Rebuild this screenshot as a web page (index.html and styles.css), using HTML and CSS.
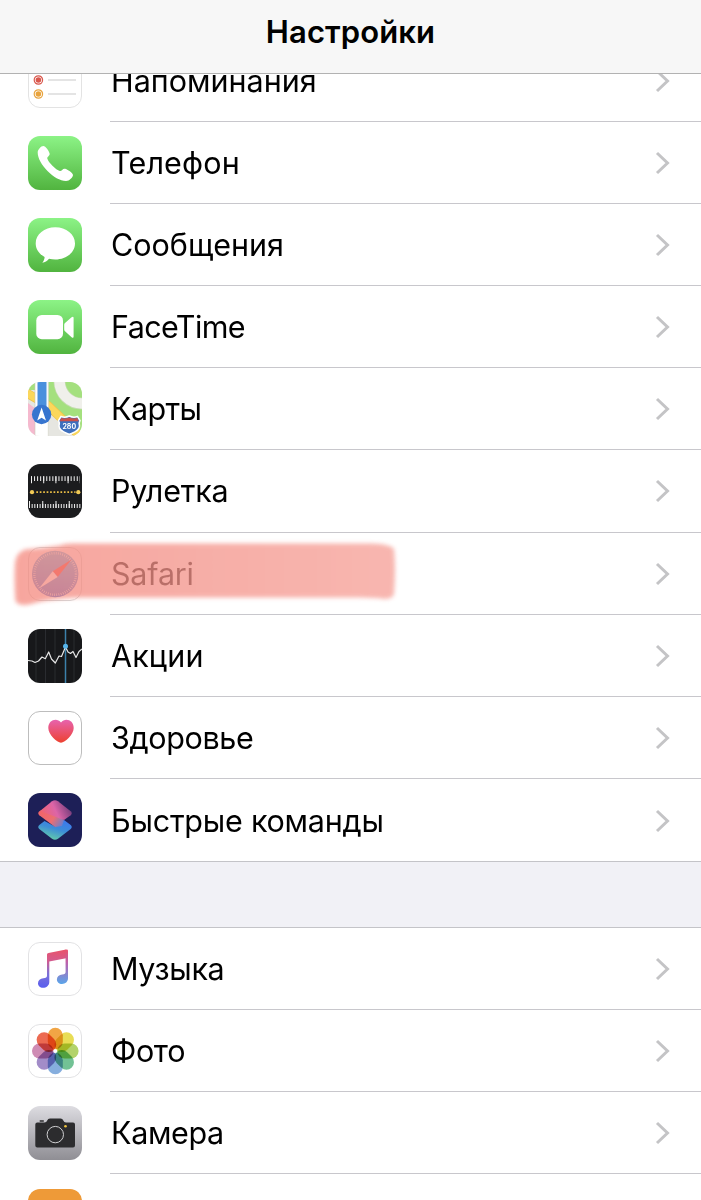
FILE: index.html
```html
<!DOCTYPE html>
<html lang="ru">
<head>
    <meta charset="UTF-8">
    <meta name="viewport" content="width=device-width, initial-scale=1.0">
    <title>Настройки</title>
    <link rel="stylesheet" href="styles.css">
</head>
<body>
    <header class="navbar">
        <h1>Настройки</h1>
    </header>

    <main>
        <ul class="group first">
            <li class="row">
                <svg class="icon" viewBox="0 0 54 54">
                    <rect x=".5" y=".5" width="53" height="53" rx="11.5" fill="#fff" stroke="#e3e3e3"/>
                    <g fill="none" stroke-width="1.2">
                        <circle cx="10.4" cy="12" r="4.2" stroke="#4a90e2"/>
                        <circle cx="10.4" cy="26" r="4.2" stroke="#d9574c"/>
                        <circle cx="10.4" cy="40" r="4.2" stroke="#e8a33d"/>
                    </g>
                    <circle cx="10.4" cy="12" r="2.8" fill="#4a90e2"/>
                    <circle cx="10.4" cy="26" r="2.8" fill="#d9574c"/>
                    <circle cx="10.4" cy="40" r="2.8" fill="#e8a33d"/>
                    <path d="M20 12H48M20 26H48M20 40H48" stroke="#dcdcdc" stroke-width="1.6"/>
                </svg>
                <div class="cell"><span class="label reminders">Напоминания</span><svg class="chevron" viewBox="0 0 15 24"><path id="arrow" d="M2 2L12.5 12L2 22"/></svg></div>
            </li>
            <li class="row">
                <svg class="icon" viewBox="0 0 54 54">
                    <defs>
                        <linearGradient id="green" x1="0" y1="0" x2="0" y2="1">
                            <stop offset="0" stop-color="#8cf386"/>
                            <stop offset="1" stop-color="#51b43f"/>
                        </linearGradient>
                    </defs>
                    <rect width="54" height="54" rx="12" fill="url(#green)"/>
                    <path fill="#fff" d="M15.3 10C17.6 10 21 15 21.6 17.4C22.2 19.6 18.9 20.6 19.3 22.6C20.2 26.3 28 34.2 31.8 35C33.8 35.3 34.6 32.4 37 32.8C39.4 33.3 45 37 45 39C44.8 41.3 41.5 45 38 45C26.5 45 9.7 28 9.7 16.5C9.7 13.5 13 10 15.3 10Z"/>
                </svg>
                <div class="cell"><span class="label phone">Телефон</span><svg class="chevron" viewBox="0 0 15 24"><use href="#arrow"/></svg></div>
            </li>
            <li class="row">
                <svg class="icon" viewBox="0 0 54 54">
                    <rect width="54" height="54" rx="12" fill="url(#green)"/>
                    <path fill="#fff" d="M27.3 9.3C38.2 9.3 47 16.5 47 25.4C47 34.3 38.2 41.5 27.3 41.5C25.1 41.5 23 41.2 21 40.7C19.4 42.6 16.8 44.5 14.3 44.7C15.7 43.2 16.6 41 16.6 39C11.2 36 7.7 31 7.7 25.4C7.7 16.5 16.4 9.3 27.3 9.3Z"/>
                </svg>
                <div class="cell"><span class="label messages">Сообщения</span><svg class="chevron" viewBox="0 0 15 24"><use href="#arrow"/></svg></div>
            </li>
            <li class="row">
                <svg class="icon" viewBox="0 0 54 54">
                    <rect width="54" height="54" rx="12" fill="url(#green)"/>
                    <rect x="8.3" y="15" width="26.7" height="24.2" rx="5.5" fill="#fff"/>
                    <path fill="#fff" d="M36.2 24.7Q36.2 23.7 37 23L43.6 17.2Q45.6 16 45.6 18V36.5Q45.6 38.6 43.6 37.2L37 31.3Q36.2 30.6 36.2 29.6Z"/>
                </svg>
                <div class="cell"><span class="label facetime">FaceTime</span><svg class="chevron" viewBox="0 0 15 24"><use href="#arrow"/></svg></div>
            </li>
            <li class="row">
                <svg class="icon" viewBox="0 0 54 54">
                    <clipPath id="mapClip"><rect width="54" height="54" rx="12"/></clipPath>
                    <g clip-path="url(#mapClip)">
                        <rect width="54" height="54" fill="#e6e6e1"/>
                        <path d="M20 0H54V50L20 24Z" fill="#a4e07e"/>
                        <path d="M0 0H8V8H0Z" fill="#a4e07e"/>
                        <circle cx="54" cy="-1" r="22.5" fill="none" stroke="#c3dcae" stroke-width="12"/>
                        <circle cx="54" cy="-1" r="22.5" fill="none" stroke="#f0f0eb" stroke-width="10.5"/>
                        <path d="M0 21L8 27V54H0Z" fill="#f5b9ce"/>
                        <path d="M-2 10.5L20 23.5L52 54" fill="none" stroke="#f0c347" stroke-width="9"/>
                        <path d="M-2 10.5L20 23.5L52 54" fill="none" stroke="#fbd75b" stroke-width="7.5"/>
                        <path d="M7 0H20.5V54H7Z" fill="#fff"/>
                        <path d="M7 0V54M20.3 0V54" stroke="#c9c9bd" stroke-width=".6"/>
                        <path d="M9.5 0H18.5V32H9.5Z" fill="#4a90dd"/>
                        <circle cx="13.6" cy="32.5" r="9.7" fill="#3775cf"/>
                        <path d="M13.6 25.5L18 38.5L13.6 35.7L9.2 38.5Z" fill="#fff"/>
                        <path d="M33 34.5Q37 36.2 41.3 34Q45.5 36.2 49.5 34.5L52 38.5Q50.5 41 51.5 44C51.5 49 45.5 50.5 41.3 52.5C37 50.5 31 49 31 44Q32 41 30.5 38.5Z" fill="#3e6fbd" stroke="#fff" stroke-width="1.5"/>
                        <path d="M33.2 36Q37.3 37 41.3 35.4Q45.5 37 49.3 36L50.7 39.3H31.8Z" fill="#c9504a"/>
                        <text x="41.3" y="46.6" text-anchor="middle" class="shield">280</text>
                    </g>
                </svg>
                <div class="cell"><span class="label maps">Карты</span><svg class="chevron" viewBox="0 0 15 24"><use href="#arrow"/></svg></div>
            </li>
            <li class="row">
                <svg class="icon" viewBox="0 0 54 54">
                    <rect width="54" height="54" rx="12" fill="#1b1c1e"/>
                    <g fill="none" stroke="#f1f1f1">
                        <path d="M3 14.6H52" stroke-width="4.6" stroke-dasharray="1 2.05"/>
                        <path d="M3 15.8H52" stroke-width="7" stroke-dasharray="1 11.2"/>
                        <path d="M1 42H53" stroke-width="3.8" stroke-dasharray="1 1.65"/>
                        <path d="M1 40.4H53" stroke-width="7" stroke-dasharray="1 12.25"/>
                    </g>
                    <path d="M8.3 28.2H47.5" stroke="#e9bd45" stroke-width="1.7" stroke-dasharray="1.7 1.75"/>
                    <circle cx="4" cy="28.2" r="2.1" fill="#f2cb56"/>
                    <circle cx="50.3" cy="28.2" r="2.1" fill="#f2cb56"/>
                </svg>
                <div class="cell"><span class="label measure">Рулетка</span><svg class="chevron" viewBox="0 0 15 24"><use href="#arrow"/></svg></div>
            </li>
            <li class="row">
                <svg class="icon" viewBox="0 0 54 54">
                    <defs>
                        <linearGradient id="compass" x1="0" y1="0" x2="0" y2="1">
                            <stop offset="0" stop-color="#5cb8ec"/>
                            <stop offset="1" stop-color="#3a6ad8"/>
                        </linearGradient>
                    </defs>
                    <rect x=".5" y=".5" width="53" height="53" rx="11.5" fill="#fff" stroke="#d6d6d6"/>
                    <circle cx="27.2" cy="27" r="23.2" fill="url(#compass)"/>
                    <circle cx="27.2" cy="27" r="20.8" fill="none" stroke="#fff" stroke-width="2.4" stroke-dasharray=".6 1.58"/>
                    <path d="M43.5 12.5L29.7 30L24.7 24.2Z" fill="#f0392f"/>
                    <path d="M11 41.5L24.7 24.2L29.7 30Z" fill="#fff"/>
                </svg>
                <div class="cell"><span class="label safari">Safari</span><svg class="chevron" viewBox="0 0 15 24"><use href="#arrow"/></svg></div>
                <!-- highlighter stroke over the row -->
                <svg class="marker" viewBox="0 0 400 82">
                    <defs>
                        <linearGradient id="ink" x1="0" y1="0" x2="1" y2="0">
                            <stop offset="0" stop-color="#f58b80"/>
                            <stop offset=".45" stop-color="#f4948b"/>
                            <stop offset="1" stop-color="#f6a097"/>
                        </linearGradient>
                        <filter id="soft" x="-5%" y="-10%" width="110%" height="120%"><feGaussianBlur stdDeviation="1.9"/></filter>
                    </defs>
                    <path filter="url(#soft)" fill="url(#ink)" d="M15 30Q16 20 25 16.5Q44 15 60 12.500Q64 10.500 72 10.500H372Q390 11 394 16Q396 35 394 61Q393 66 384 66Q376 64.5 360 64.5H82Q48 65.5 31 71Q19 74 15.5 68Q14 50 15 30Z"/>
                </svg>
            </li>
            <li class="row">
                <svg class="icon" viewBox="0 0 54 54">
                    <rect width="54" height="54" rx="12" fill="#17181a"/>
                    <path d="M8 1V53M17.5 0V54M27 0V54M46 1V53" stroke="#303236" stroke-width=".8"/>
                    <path d="M37.5 0V54" stroke="#3c81ab" stroke-width="1.5"/>
                    <path d="M0 31.5L4 32L7 33.5L10.5 32L14 28L17.3 29.7L20.7 23L23.5 30L27.3 34L31 27L33.5 27.5L37.5 18L40 23L42.5 24.5L45 22.5L48 28.5L51 22.5L54 20" fill="none" stroke="#e6e6e6" stroke-width="1.2" stroke-linejoin="round"/>
                    <circle cx="37.5" cy="17.2" r="2.5" fill="#56b4ea"/>
                </svg>
                <div class="cell"><span class="label stocks">Акции</span><svg class="chevron" viewBox="0 0 15 24"><use href="#arrow"/></svg></div>
            </li>
            <li class="row">
                <svg class="icon" viewBox="0 0 54 54">
                    <defs>
                        <linearGradient id="heart" x1="0" y1="0" x2="0" y2="1">
                            <stop offset="0" stop-color="#e763ae"/>
                            <stop offset="1" stop-color="#ed4130"/>
                        </linearGradient>
                    </defs>
                    <rect x=".5" y=".5" width="53" height="53" rx="11.5" fill="#fff" stroke="#bdbdbd"/>
                    <path fill="url(#heart)" d="M33 11.5C37 6.5 45.7 8.7 45.7 17C45.7 23.5 37 31.7 33 31.7C29 31.7 20.3 23.5 20.3 17C20.3 8.7 29 6.5 33 11.5Z"/>
                </svg>
                <div class="cell"><span class="label health">Здоровье</span><svg class="chevron" viewBox="0 0 15 24"><use href="#arrow"/></svg></div>
            </li>
            <li class="row">
                <svg class="icon" viewBox="0 0 54 54">
                    <defs>
                        <linearGradient id="topTile" x1="0" y1=".7" x2="1" y2=".4">
                            <stop offset="0" stop-color="#f0646a"/>
                            <stop offset=".5" stop-color="#dc65a8"/>
                            <stop offset="1" stop-color="#6c3a78"/>
                        </linearGradient>
                        <linearGradient id="bottomTile" x1=".25" y1="1" x2=".75" y2="0">
                            <stop offset="0" stop-color="#67d3a4"/>
                            <stop offset=".55" stop-color="#3d8dd8"/>
                            <stop offset="1" stop-color="#3c78ee"/>
                        </linearGradient>
                        <linearGradient id="fold" gradientUnits="userSpaceOnUse" x1="14" y1="17" x2="38" y2="32">
                            <stop offset="0" stop-color="#f0646a"/>
                            <stop offset=".5" stop-color="#ec6e72"/>
                            <stop offset="1" stop-color="#4a82e5"/>
                        </linearGradient>
                    </defs>
                    <rect width="54" height="54" rx="12" fill="#1d1f57"/>
                    <path fill="url(#bottomTile)" d="M11.3 32L16.5 28L27 33.5L36 27L42.7 32Q44.8 34 42.7 36L30 45.8Q27 47.8 24 45.8L11.3 36Q9.2 34 11.3 32Z"/>
                    <path fill="url(#fold)" d="M11.3 22.3Q9.2 20.3 11.3 18.2L18 15L36 27L34 33L27 34Z"/>
                    <path fill="url(#topTile)" d="M24 8.3Q27 6.3 30 8.3L42.7 18.2Q44.8 20.3 42.7 22.3L36 27L12 18Z"/>
                </svg>
                <div class="cell"><span class="label shortcuts">Быстрые команды</span><svg class="chevron" viewBox="0 0 15 24"><use href="#arrow"/></svg></div>
            </li>
        </ul>

        <ul class="group second">
            <li class="row">
                <svg class="icon" viewBox="0 0 54 54">
                    <defs>
                        <linearGradient id="note" gradientUnits="userSpaceOnUse" x1="30" y1="8" x2="27" y2="46">
                            <stop offset="0" stop-color="#e8536c"/>
                            <stop offset=".3" stop-color="#d35b8e"/>
                            <stop offset=".65" stop-color="#7a70d8"/>
                            <stop offset="1" stop-color="#5b5fee"/>
                        </linearGradient>
                        <linearGradient id="noteRight" gradientUnits="userSpaceOnUse" x1="38" y1="8" x2="36" y2="42">
                            <stop offset="0" stop-color="#e8536c"/>
                            <stop offset=".4" stop-color="#b863b0"/>
                            <stop offset="1" stop-color="#5aa5ea"/>
                        </linearGradient>
                    </defs>
                    <rect x=".5" y=".5" width="53" height="53" rx="11.5" fill="#fff" stroke="#e2e2e4"/>
                    <path fill="url(#note)" d="M19 12.6Q19 11.2 20.5 10.9L38 7.6V16.3L21.3 19.4V40C21.3 43.5 18.3 45.8 15 45.8C12 45.8 10 43.8 10 41.2C10 38.3 12.3 36.8 15.3 36.3C18 35.9 19 35.5 19 33.5Z"/>
                    <path fill="url(#noteRight)" d="M37.5 7.7L38.5 7.5Q40 7.3 40 8.8V36.3C40 39.8 37.3 42 34 42C31 42 28.9 40 28.9 37.4C28.9 34.5 31.2 33 34.2 32.5C36.7 32.1 37.6 31.7 37.6 29.8Z"/>
                </svg>
                <div class="cell"><span class="label music">Музыка</span><svg class="chevron" viewBox="0 0 15 24"><use href="#arrow"/></svg></div>
            </li>
            <li class="row">
                <svg class="icon" viewBox="0 0 54 54">
                    <rect x=".5" y=".5" width="53" height="53" rx="11.5" fill="#fff" stroke="#e2e2e4"/>
                    <g class="petals" transform="translate(27.3 27)">
                        <rect x="-7.5" y="-23.3" width="15" height="21.5" rx="7.5" fill="#f1a545"/>
                        <rect x="-7.5" y="-23.3" width="15" height="21.5" rx="7.5" fill="#e8dd55" transform="rotate(45)"/>
                        <rect x="-7.5" y="-23.3" width="15" height="21.5" rx="7.5" fill="#b3d36b" transform="rotate(90)"/>
                        <rect x="-7.5" y="-23.3" width="15" height="21.5" rx="7.5" fill="#72c295" transform="rotate(135)"/>
                        <rect x="-7.5" y="-23.3" width="15" height="21.5" rx="7.5" fill="#86aede" transform="rotate(180)"/>
                        <rect x="-7.5" y="-23.3" width="15" height="21.5" rx="7.5" fill="#a28cc8" transform="rotate(225)"/>
                        <rect x="-7.5" y="-23.3" width="15" height="21.5" rx="7.5" fill="#cf8cb4" transform="rotate(270)"/>
                        <rect x="-7.5" y="-23.3" width="15" height="21.5" rx="7.5" fill="#ec6a51" transform="rotate(315)"/>
                    </g>
                    <circle cx="27.3" cy="27" r="1.6" fill="#fff"/>
                </svg>
                <div class="cell"><span class="label photos">Фото</span><svg class="chevron" viewBox="0 0 15 24"><use href="#arrow"/></svg></div>
            </li>
            <li class="row">
                <svg class="icon" viewBox="0 0 54 54">
                    <defs>
                        <linearGradient id="steel" x1="0" y1="0" x2="0" y2="1">
                            <stop offset="0" stop-color="#dddce1"/>
                            <stop offset="1" stop-color="#8f8e94"/>
                        </linearGradient>
                    </defs>
                    <rect width="54" height="54" rx="12" fill="url(#steel)"/>
                    <rect x="11.5" y="14.2" width="4.5" height="1.5" rx=".7" fill="#2c2c2e"/>
                    <path fill="#2c2c2e" d="M9.3 16.6H16.5Q18.5 16.3 19.2 14.5Q19.9 12.6 22 12.6H32.5Q34.6 12.6 35.3 14.5Q36 16.3 38 16.6H45Q47 16.6 47 18.6V39.4Q47 41.5 45 41.5H9.3Q7.3 41.5 7.3 39.4V18.6Q7.3 16.6 9.3 16.6Z"/>
                    <circle cx="27.3" cy="28.6" r="8.2" fill="none" stroke="#d0d0d2" stroke-width="1"/>
                    <circle cx="37.5" cy="20.3" r="1.3" fill="#f0c541"/>
                </svg>
                <div class="cell"><span class="label camera">Камера</span><svg class="chevron" viewBox="0 0 15 24"><use href="#arrow"/></svg></div>
            </li>
            <!-- next row, only its top edge is on screen -->
            <li class="row cut">
                <svg class="icon" viewBox="0 0 54 12">
                    <path d="M0 12A12 12 0 0 1 12 0H42A12 12 0 0 1 54 12Z" fill="#ee9a38"/>
                </svg>
            </li>
        </ul>
    </main>
</body>
</html>
```

FILE: styles.css
```css
* {
    box-sizing: border-box;
}
body {
    margin: 0;
    height: 1200px;
    overflow: hidden;
    background-color: #f1f1f6;
    font-family: Inter, "Noto Sans", sans-serif;
    color: #000;
}
.navbar {
    position: relative;
    z-index: 2;
    height: 73.5px;
    background-color: #f7f7f7;
    border-bottom: 1px solid #b2b2b2;
    text-align: center;
}
.navbar h1 {
    margin: 0;
    padding-top: 12px;
    font-size: 31px;
    line-height: 40px;
    font-weight: 600;
    letter-spacing: 0.1px;
}
.group {
    list-style: none;
    margin: 0;
    padding: 0;
    background-color: #fff;
    border-top: 1px solid #c4c4c8;
}
/* the list is scrolled, its top row goes under the navbar */
.first {
    margin-top: -35.1px;
    margin-bottom: 65px;
    border-bottom: 1px solid #c4c4c8;
}
.row {
    position: relative;
    display: flex;
    align-items: center;
    height: 82.2px;
    padding-left: 28px;
}
.second .row {
    height: 82px;
}
.second .row:first-child {
    height: 81.4px;
}
.icon {
    width: 54px;
    height: 54px;
    margin-right: 28px;
    flex: none;
}
.cell {
    display: flex;
    flex: 1;
    align-items: center;
    justify-content: space-between;
    height: 100%;
    padding-right: 31px;
    padding-top: 1px;
    border-bottom: 1px solid #c8c7cc;
}
.first .row:last-child .cell {
    border-bottom: none;
}
.second .row.cut {
    height: 27px;
    align-items: flex-end;
}
.cut .icon {
    height: 12px;
}
.label {
    padding-left: 1px;
    font-size: 30.5px;
    line-height: 40px;
    white-space: nowrap;
}
.phone, .stocks {
    letter-spacing: 0.15px;
}
.facetime, .maps {
    letter-spacing: -0.6px;
}
.measure, .safari {
    letter-spacing: -0.2px;
}
.health, .music, .camera, .photos {
    letter-spacing: -0.35px;
}
.shortcuts {
    letter-spacing: -0.23px;
}
.chevron {
    width: 15px;
    height: 24px;
    fill: none;
    stroke: #c4c4c6;
    stroke-width: 3;
}
.marker {
    position: absolute;
    left: 0;
    top: 0;
    width: 400px;
    height: 82px;
    opacity: 0.76;
}
.shield {
    font-size: 7px;
    font-weight: 700;
    fill: #fff;
}
.petals {
    isolation: isolate;
}
.petals rect {
    mix-blend-mode: multiply;
}
```
